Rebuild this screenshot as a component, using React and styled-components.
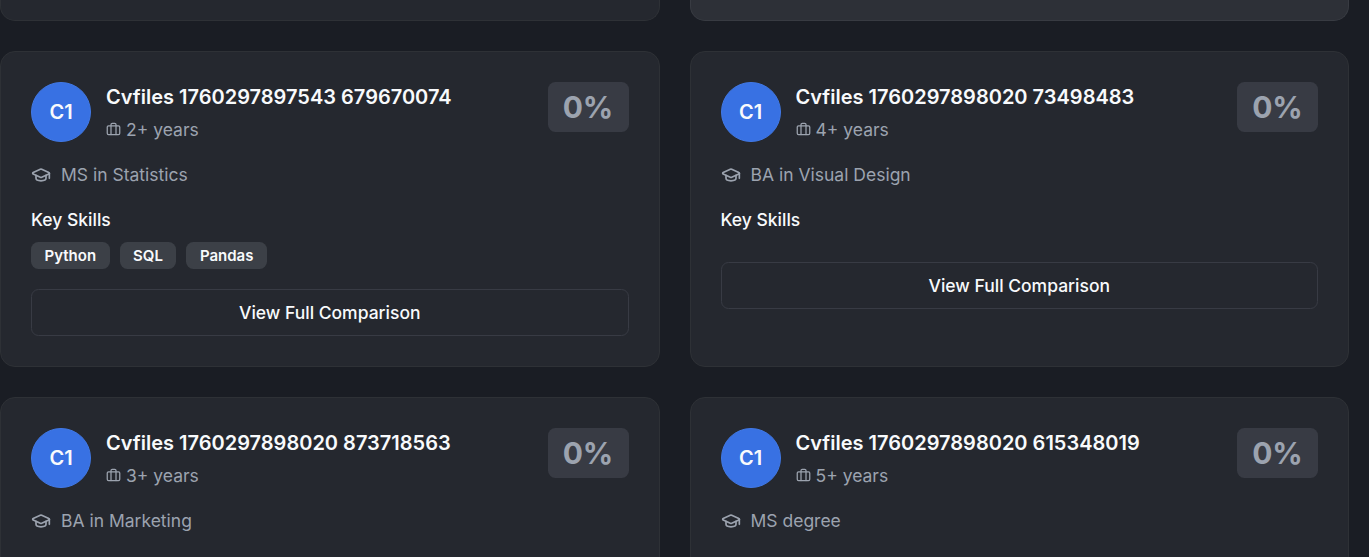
import React from "react";
import styled, { createGlobalStyle } from "styled-components";
import { Briefcase, GraduationCap } from "lucide-react";

const GlobalStyle = createGlobalStyle`
  *, *::before, *::after { box-sizing: border-box; }
  body {
    margin: 0;
    overflow: hidden;
    background: #1a1d24;
    font-family: Inter, "Liberation Sans", sans-serif;
    color: #f8fafc;
  }
`;

const Viewport = styled.main`
  height: 557px;
  padding-right: 20px;
  overflow: hidden;
`;

const Grid = styled.div`
  display: grid;
  grid-template-columns: 1fr 1fr;
  grid-template-rows: 21px 316px 316px;
  gap: 30px;
`;

const Card = styled.article`
  padding: 30px;
  border: 1px solid #2e3136;
  border-radius: 15px;
  background: #25282f;
`;

const CardEnd = styled.div`
  border: 1px solid ${(p) => (p.$active ? "#383b42" : "#2e3136")};
  border-top: 0;
  border-radius: 0 0 15px 15px;
  background: ${(p) => (p.$active ? "#2d3037" : "#25282f")};
`;

const Header = styled.header`
  display: flex;
  align-items: flex-start;
  gap: 15px;
  height: 60px;
`;

const Avatar = styled.div`
  display: flex;
  align-items: center;
  justify-content: center;
  flex: none;
  width: 60px;
  height: 60px;
  border: 1px solid #4179e6;
  border-radius: 50%;
  background: #3871e3;
  font-size: 20px;
  font-weight: 600;
`;

const Identity = styled.div`
  flex: 1;
  min-width: 0;
`;

const Name = styled.h3`
  margin: 0;
  font-size: 20px;
  line-height: 30px;
  font-weight: 600;
`;

const Experience = styled.div`
  display: flex;
  align-items: center;
  gap: 5px;
  margin-top: 5px;
  font-size: 17.5px;
  line-height: 25px;
  color: #9ca3af;
`;

const Score = styled.div`
  flex: none;
  width: 81px;
  height: 50px;
  border-radius: 7.5px;
  background: #383b44;
  color: #9ca3af;
  font-size: 30px;
  line-height: 50px;
  font-weight: 700;
  text-align: center;
`;

const Education = styled.div`
  display: flex;
  align-items: center;
  gap: 10px;
  margin-top: 20px;
  font-size: 17.5px;
  line-height: 25px;
  color: #9ca3af;
`;

const SkillsTitle = styled.h4`
  margin: 20px 0 10px;
  font-size: 17.5px;
  line-height: 25px;
  font-weight: 500;
`;

const Skills = styled.div`
  display: flex;
  gap: 10px;
  margin-bottom: 20px;
`;

const Skill = styled.span`
  height: 27px;
  padding: 0 13.5px;
  border-radius: 7.5px;
  background: #3c4047;
  font-size: 15px;
  line-height: 27px;
  font-weight: 600;
`;

const CompareButton = styled.button`
  display: block;
  width: 100%;
  height: 47px;
  padding: 0;
  border: 1px solid #383b44;
  border-radius: 7.5px;
  background: transparent;
  color: #f8fafc;
  font: 500 17.5px/25px Inter, "Liberation Sans", sans-serif;
`;

const candidates = [
  { name: "Cvfiles 1760297897543 679670074", years: 2, education: "MS in Statistics", skills: ["Python", "SQL", "Pandas"] },
  { name: "Cvfiles 1760297898020 73498483", years: 4, education: "BA in Visual Design", skills: [] },
  { name: "Cvfiles 1760297898020 873718563", years: 3, education: "BA in Marketing" },
  { name: "Cvfiles 1760297898020 615348019", years: 5, education: "MS degree" },
];

function CandidateCard({ name, years, education, skills }) {
  return (
    <Card>
      <Header>
        <Avatar>C1</Avatar>
        <Identity>
          <Name>{name}</Name>
          <Experience>
            <Briefcase size={15} />
            <span>{years}+ years</span>
          </Experience>
        </Identity>
        <Score>0%</Score>
      </Header>
      <Education>
        <GraduationCap size={20} />
        <span>{education}</span>
      </Education>
      {skills && (
        <>
          <SkillsTitle>Key Skills</SkillsTitle>
          <Skills>
            {skills.map((skill) => (
              <Skill key={skill}>{skill}</Skill>
            ))}
          </Skills>
          <CompareButton type="button">View Full Comparison</CompareButton>
        </>
      )}
    </Card>
  );
}

export default function App() {
  return (
    <>
      <GlobalStyle />
      <Viewport>
        <Grid>
          <CardEnd />
          <CardEnd $active />
          {candidates.map((candidate) => (
            <CandidateCard key={candidate.name} {...candidate} />
          ))}
        </Grid>
      </Viewport>
    </>
  );
}
